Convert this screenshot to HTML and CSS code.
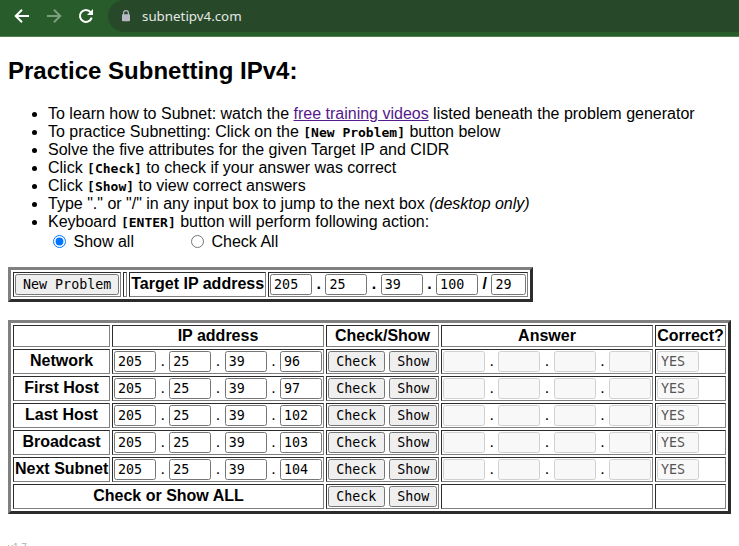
FILE: index.html
```
<!DOCTYPE html>
<html lang="en">
<head>
<meta charset="utf-8">
<title>Practice Subnetting IPv4</title>
<link rel="stylesheet" href="styles.css">
</head>
<body>
<header class="browser-bar">
  <svg class="nav-icon" viewBox="0 0 16 16"><path d="M15 8H2M8 1.7L1.7 8L8 14.3"/></svg>
  <svg class="nav-icon disabled" viewBox="0 0 16 16"><path d="M1 8H14M8 1.7L14.3 8L8 14.3"/></svg>
  <svg class="nav-icon" viewBox="0 0 16 16"><path d="M13.7 9.6A6 6 0 1 1 12.6 4.1L14 5.6"/><path class="solid" d="M15 1V7H9Z"/></svg>
  <div class="address">
    <svg class="lock" viewBox="0 0 10 12"><path d="M2.6 5V3.1a2.4 2.4 0 0 1 4.8 0V5"/><rect x="1" y="4.2" width="8" height="7" rx=".9"/></svg>
    <span>subnetipv4.com</span>
  </div>
</header>
<main>
  <h2>Practice Subnetting IPv4:</h2>
  <ul>
    <li>To learn how to Subnet: watch the <a href="#">free training videos</a> listed beneath the problem generator</li>
    <li>To practice Subnetting: Click on the <code>[New Problem]</code> button below</li>
    <li>Solve the five attributes for the given Target IP and CIDR</li>
    <li>Click <code>[Check]</code> to check if your answer was correct</li>
    <li>Click <code>[Show]</code> to view correct answers</li>
    <li>Type "." or "/" in any input box to jump to the next box <i>(desktop only)</i></li>
    <li>Keyboard <code>[ENTER]</code> button will perform following action:
      <div class="actions">
        <label><input type="radio" name="enter" checked>Show all</label>
        <label><input type="radio" name="enter">Check All</label>
      </div>
    </li>
  </ul>
  <table class="problem">
    <tr>
      <th><button>New Problem</button></th>
      <th></th>
      <th class="label">Target IP address</th>
      <th class="target"><input value="205"> . <input value="25"> . <input value="39"> . <input value="100"> / <input class="cidr" value="29"></th>
    </tr>
  </table>
  <table class="answers">
    <colgroup><col class="c-name"><col class="c-ip"><col class="c-check"><col class="c-ip"><col class="c-correct"></colgroup>
    <tr class="head"><th></th><th>IP address</th><th>Check/Show</th><th>Answer</th><th>Correct?</th></tr>
    <tr>
      <th class="label">Network</th>
      <td><input value="205"> . <input value="25"> . <input value="39"> . <input value="96"></td>
      <td><button>Check</button> <button>Show</button></td>
      <td><input disabled> . <input disabled> . <input disabled> . <input disabled></td>
      <td><input value="YES" disabled></td>
    </tr>
    <tr>
      <th class="label">First Host</th>
      <td><input value="205"> . <input value="25"> . <input value="39"> . <input value="97"></td>
      <td><button>Check</button> <button>Show</button></td>
      <td><input disabled> . <input disabled> . <input disabled> . <input disabled></td>
      <td><input value="YES" disabled></td>
    </tr>
    <tr>
      <th class="label">Last Host</th>
      <td><input value="205"> . <input value="25"> . <input value="39"> . <input value="102"></td>
      <td><button>Check</button> <button>Show</button></td>
      <td><input disabled> . <input disabled> . <input disabled> . <input disabled></td>
      <td><input value="YES" disabled></td>
    </tr>
    <tr>
      <th class="label">Broadcast</th>
      <td><input value="205"> . <input value="25"> . <input value="39"> . <input value="103"></td>
      <td><button>Check</button> <button>Show</button></td>
      <td><input disabled> . <input disabled> . <input disabled> . <input disabled></td>
      <td><input value="YES" disabled></td>
    </tr>
    <tr>
      <th class="label">Next Subnet</th>
      <td><input value="205"> . <input value="25"> . <input value="39"> . <input value="104"></td>
      <td><button>Check</button> <button>Show</button></td>
      <td><input disabled> . <input disabled> . <input disabled> . <input disabled></td>
      <td><input value="YES" disabled></td>
    </tr>
    <tr>
      <th class="label" colspan="2">Check or Show ALL</th>
      <td><button>Check</button> <button>Show</button></td>
      <td></td>
      <td></td>
    </tr>
  </table>
  <p class="version">v1.7</p>
</main>
</body>
</html>
```
FILE: styles.css
```
html, body {
  height: 100%;
  overflow: hidden;
}

body {
  margin: 0;
  background: #fff;
  color: #000;
  font: 16px/18px "Liberation Sans", Arial, sans-serif;
}

.browser-bar {
  box-sizing: border-box;
  height: 37px;
  display: flex;
  align-items: flex-start;
  gap: 16px;
  padding-left: 14px;
  background: #285d2b;
  border-bottom: 1px solid #528055;
}

.nav-icon {
  width: 16px;
  height: 16px;
  margin-top: 8px;
  flex: none;
  fill: none;
  stroke: #fff;
  stroke-width: 2;
}

.nav-icon.disabled {
  stroke: #7d9f7f;
}

.nav-icon .solid {
  fill: #fff;
  stroke: none;
}

.address {
  flex: 1;
  height: 32px;
  margin-left: -2px;
  padding-left: 13px;
  display: flex;
  align-items: center;
  gap: 11px;
  border-radius: 16px 0 0 16px;
  background: #28482a;
  color: #e3e8e3;
  font: 13.33px/32px "Noto Sans", sans-serif;
}

.lock {
  width: 10px;
  height: 12px;
  fill: #b9b9c5;
}

.lock path {
  fill: none;
  stroke: #b9b9c5;
  stroke-width: 1.2;
}

main {
  padding: 20px 8px 0;
}

h2 {
  margin: 0 0 21px;
  font-size: 24px;
  line-height: 27px;
}

ul {
  margin: 0 0 15px;
  padding-left: 40px;
}

a {
  color: #551a8b;
}

code {
  font: bold 13px/1 "DejaVu Sans Mono", monospace;
}

.actions {
  display: flex;
  height: 21px;
  align-items: center;
}

.actions label {
  width: 138px;
  display: flex;
  align-items: center;
}

.actions input {
  width: 13px;
  height: 13px;
  margin: -1px 7.5px 0 5px;
}

table {
  border: 3px solid;
  border-color: #808080 #2c2c2c #2c2c2c #808080;
  border-spacing: 2px;
}

th, td {
  height: 21px;
  padding: 1px;
  border: 1px solid;
  border-color: #2c2c2c #808080 #808080 #2c2c2c;
  line-height: 18px;
  white-space: nowrap;
}

.label {
  padding: 0 1px 2px;
}

.target {
  padding-right: 1.6px;
}

table input, table button {
  box-sizing: border-box;
  height: 21px;
  margin: 0;
  border: 1px solid #767676;
  border-radius: 2.5px;
  font: 13.33px/16px "DejaVu Sans Mono", monospace;
  vertical-align: middle;
}

table input {
  width: 42px;
  padding: 1px 3px;
  background: #fff;
}

table input.cidr {
  width: 34.4px;
}

table input:disabled {
  border-color: #d0d0d0;
  background: #f8f8f8;
  color: #545454;
}

table button {
  padding: 1px 7px;
  background: #efefef;
  color: #000;
}

td button {
  padding: 1px 7.2px;
}

.answers {
  width: 723px;
  margin-top: 18px;
  table-layout: fixed;
}

.head th {
  height: 18px;
}

.c-name {
  width: 97px;
}

.c-ip {
  width: 212px;
}

.c-check {
  width: 113px;
}

.c-correct {
  width: 71px;
}

.version {
  margin: 28px 0 0;
  color: #b0b0b0;
  font-size: 10px;
  line-height: 12px;
}
```
